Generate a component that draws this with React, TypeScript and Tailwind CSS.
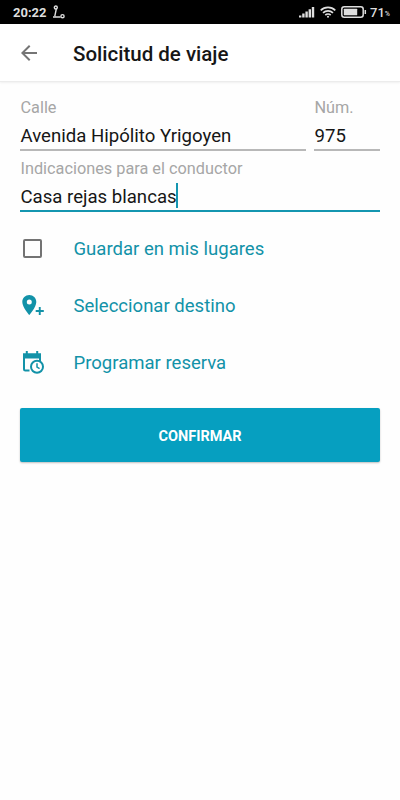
import React from 'react';

function StatusBar() {
  return (
    <div className="flex h-6 items-center justify-between bg-black pl-[13px] pr-[10px] text-[#dedede]">
      <div className="flex items-center gap-[5px]">
        <span className="pt-[2px] text-[13px] font-bold leading-[22px]">20:22</span>
        <svg width="14" height="14" viewBox="0 0 14 14" fill="none" stroke="currentColor" strokeWidth="1.4">
          <circle cx="3.8" cy="2.5" r="1.5" />
          <path d="M4.3 4 2.8 11.2M1 12h7.5" />
          <circle cx="10.5" cy="11.2" r="1.6" />
        </svg>
      </div>
      <div className="flex items-center">
        <svg width="16" height="12" viewBox="0 0 16 12" fill="currentColor">
          <path d="M0 9.5h2.4v2H0zM3.2 7.5h2.4v4H3.2zM6.4 5.5h2.4v6H6.4zM9.6 3.2H12v8.3H9.6zM12.8 1h2.4v10.5h-2.4z" />
        </svg>
        <svg className="ml-[5px]" width="16" height="12" viewBox="0 0 16 12" fill="none" stroke="currentColor" strokeWidth="1.6">
          <path d="M.7 4.4a10.4 10.4 0 0 1 14.6 0M3 6.9a7.1 7.1 0 0 1 10 0M5.3 9.1a3.9 3.9 0 0 1 5.4 0" />
          <circle cx="8" cy="10.8" r="1" fill="currentColor" stroke="none" />
        </svg>
        <svg className="ml-[5px]" width="26" height="12" viewBox="0 0 26 12" fill="none" stroke="currentColor" strokeWidth="1.5">
          <rect x=".8" y=".8" width="21.4" height="10.4" rx="2.5" />
          <rect x="2.8" y="2.8" width="13.4" height="6.4" rx=".5" fill="currentColor" stroke="none" />
          <path d="M24.3 4v4" />
        </svg>
        <span className="ml-[3px] pt-[2px] text-[13px] font-medium leading-[22px]">71</span>
        <span className="pt-[4px] text-[7px] font-medium">%</span>
      </div>
    </div>
  );
}

interface FieldProps {
  label: string;
  value: string;
  className?: string;
  focused?: boolean;
}

function Field({ label, value, className = '', focused = false }: FieldProps) {
  return (
    <div className={className}>
      <div className="h-[22px] whitespace-nowrap pl-[0.5px] pt-px text-[16.3px] leading-[22px] text-[#a6a6a6]">{label}</div>
      <div
        className={`flex h-[33px] items-start whitespace-nowrap border-b-2 pl-[0.5px] text-[18.6px] leading-[28px] text-[#161616] ${
          focused ? 'border-[#1496b0]' : 'border-[#b8b8b8]'
        }`}
      >
        <span className="pt-[4px]">{value}</span>
        {focused && <span className="-ml-px mt-[4px] h-[25px] w-[2px] bg-[#1496b0]" />}
      </div>
    </div>
  );
}

function Option({ icon, label }: { icon: React.ReactNode; label: string }) {
  return (
    <button className="flex h-[57px] w-full items-center text-left text-[#1292a8]">
      <span className="w-[53px]">{icon}</span>
      <span className="pl-[0.5px] pt-[2px] text-[18.55px]">{label}</span>
    </button>
  );
}

function PinIcon() {
  return (
    <svg width="25" height="24" viewBox="0 0 25 24" fill="currentColor">
      <path
        fillRule="evenodd"
        d="M9.3 1C5.4 1 2.3 4.1 2.3 8c0 5.2 7 13 7 13s7-7.8 7-13c0-3.9-3.1-7-7-7zm0 9.5a2.5 2.5 0 1 1 0-5 2.5 2.5 0 0 1 0 5z"
      />
      <path d="M18.8 13h1.9v3.1h3.1V18h-3.1v3.1h-1.900V18h-3.100v-1.900h3.100z" />
    </svg>
  );
}

function CalendarIcon() {
  return (
    <svg width="25" height="24" viewBox="0 0 25 24" fill="none" stroke="currentColor">
      <path d="M9.5 19.5H5.3C4.5 19.5 4 19 4 18.2V4h16v6" strokeWidth="2" />
      <path d="M3 2.2h18v5.3H3zM5.8 0h2v4h-2zM16.2 0h2v4h-2z" fill="currentColor" stroke="none" />
      <circle cx="17" cy="15.8" r="6" fill="white" strokeWidth="2" />
      <path d="M17 12.3v3.8l2.6 1.6" strokeWidth="1.5" />
    </svg>
  );
}

export default function App() {
  return (
    <div className="min-h-screen w-full bg-[#fefefe] font-['Roboto',sans-serif]">
      <StatusBar />
      <header className="flex h-[58px] items-center border-b border-[#ececec] bg-white pl-[17px] shadow-[0_1px_2px_rgba(0,0,0,0.06)]">
        <svg width="24" height="24" viewBox="0 0 24 24" fill="#757575">
          <path d="M20 11H7.83l5.59-5.59L12 4l-8 8 8 8 1.41-1.41L7.83 13H20v-2z" />
        </svg>
        <h1 className="ml-8 pt-[2px] text-[20.5px] font-medium leading-[30px] text-[#161616]">Solicitud de viaje</h1>
      </header>

      <main className="px-5 pt-[14px]">
        <div className="flex gap-2">
          <Field className="w-[286px]" label="Calle" value="Avenida Hipólito Yrigoyen" />
          <Field className="flex-1" label="Núm." value="975" />
        </div>
        <Field className="mt-[6px]" label="Indicaciones para el conductor" value="Casa rejas blancas" focused />

        <div className="pt-2">
          <Option
            icon={<span className="ml-[3px] block size-[19px] rounded-[2px] border-2 border-[#737373]" />}
            label="Guardar en mis lugares"
          />
          <Option icon={<PinIcon />} label="Seleccionar destino" />
          <Option icon={<CalendarIcon />} label="Programar reserva" />
        </div>

        <button className="mt-[17px] h-[54px] w-full rounded-[2px] bg-[#069fc0] pt-[3px] text-[14.5px] font-bold text-white shadow-[0_1px_2px_rgba(0,0,0,0.25)]">
          CONFIRMAR
        </button>
      </main>
    </div>
  );
}
